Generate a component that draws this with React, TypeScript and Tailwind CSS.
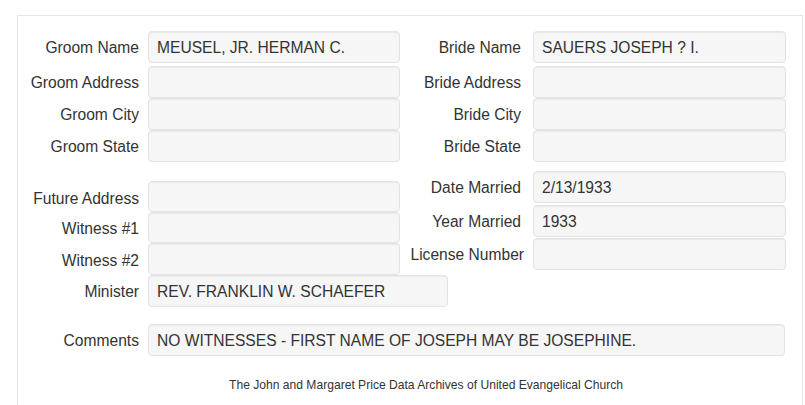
type FieldProps = {
    label: string;
    value?: string;
    rowClass?: string;
    labelClass?: string;
    boxClass?: string;
};

// readonly "well" box, bootstrap-ish
function Field({ label, value = "", rowClass = "", labelClass = "w-[121px]", boxClass = "" }: FieldProps) {
    return (
        <div className={`flex items-center ${rowClass}`}>
            <div className={`shrink-0 text-right whitespace-nowrap pt-[2px] ${labelClass}`}>{label}</div>
            <div
                className={`flex shrink-0 items-center h-full whitespace-nowrap rounded-[4px] border border-[#e3e3e3] bg-[#f6f6f6] pl-[8px] pt-[2px] shadow-[inset_0_1px_1px_rgba(0,0,0,0.05)] ${boxClass}`}
            >
                {value}
            </div>
        </div>
    );
}

export default function App() {
    return (
        <div className="w-[805px] h-[405px] overflow-hidden bg-white font-['Liberation_Sans',Arial,sans-serif] text-[15.6px] text-[#333]">
            <div className="ml-[17px] mt-[15px] w-[786px] h-[420px] border border-[#e5e5e5] pt-[15px]">

                {/* two columns of fields */}
                <div className="flex">
                    <div className="w-[382px]">
                        <Field label="Groom Name" value="MEUSEL, JR. HERMAN C." rowClass="h-[32px]" boxClass="ml-[9px] w-[252px]" />
                        <Field label="Groom Address" rowClass="h-[32px] mt-[3px]" boxClass="ml-[9px] w-[252px]" />
                        <Field label="Groom City" rowClass="h-[32px]" boxClass="ml-[9px] w-[252px]" />
                        <Field label="Groom State" rowClass="h-[32px]" boxClass="ml-[9px] w-[252px]" />
                        <Field label="Future Address" rowClass="h-[31px] mt-[19px]" labelClass="w-[121px] pt-[4px]" boxClass="ml-[9px] w-[252px]" />
                        <Field label="Witness #1" rowClass="h-[31px]" boxClass="ml-[9px] w-[252px]" />
                        <Field label="Witness #2" rowClass="h-[32px]" labelClass="w-[121px] pt-[3px]" boxClass="ml-[9px] w-[252px]" />
                        <Field label="Minister" value="REV. FRANKLIN W. SCHAEFER" rowClass="h-[32px]" boxClass="ml-[9px] w-[300px]" />
                    </div>
                    <div className="w-[386px]">
                        <Field label="Bride Name" value="SAUERS JOSEPH ? I." rowClass="h-[32px]" boxClass="ml-[12px] w-[253px]" />
                        <Field label="Bride Address" rowClass="h-[32px] mt-[3px]" boxClass="ml-[12px] w-[253px]" />
                        <Field label="Bride City" rowClass="h-[32px]" boxClass="ml-[12px] w-[253px]" />
                        <Field label="Bride State" rowClass="h-[32px]" boxClass="ml-[12px] w-[253px]" />
                        <Field label="Date Married" value="2/13/1933" rowClass="h-[32px] mt-[9px]" boxClass="ml-[12px] w-[253px]" />
                        <Field label="Year Married" value="1933" rowClass="h-[32px] mt-[2px]" boxClass="ml-[12px] w-[253px]" />
                        <Field label="License Number" rowClass="h-[32px] mt-[1px]" labelClass="w-[124px]" boxClass="ml-[9px] w-[253px]" />
                    </div>
                </div>

                {/* comments */}
                <Field
                    label="Comments"
                    value="NO WITNESSES - FIRST NAME OF JOSEPH MAY BE JOSEPHINE."
                    rowClass="h-[32px] mt-[17px]"
                    boxClass="ml-[9px] w-[637px]"
                />

                {/* footer */}
                <div className="mt-[21px] pl-[32px] text-center text-[12.1px] leading-[16px] text-[#333]">
                    The John and Margaret Price Data Archives of United Evangelical Church
                </div>
            </div>
        </div>
    );
}
